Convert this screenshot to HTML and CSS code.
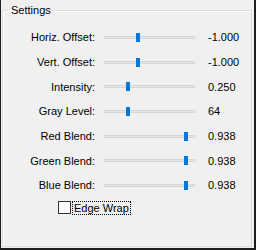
FILE: index.html
```html
<!DOCTYPE html>
<html lang="en">
<head>
    <meta charset="UTF-8">
    <title>Settings</title>
    <link rel="stylesheet" href="styles.css">
</head>
<body>
    <div class="panel">
        <fieldset class="group">
            <legend>Settings</legend>
            <div class="rows">
                <label>Horiz. Offset:</label>
                <div class="slider"><div class="track"></div><div class="thumb" style="left:33px"></div></div>
                <span class="value">-1.000</span>

                <label>Vert. Offset:</label>
                <div class="slider"><div class="track"></div><div class="thumb" style="left:33px"></div></div>
                <span class="value">-1.000</span>

                <label>Intensity:</label>
                <div class="slider"><div class="track"></div><div class="thumb" style="left:23px"></div></div>
                <span class="value">0.250</span>

                <label>Gray Level:</label>
                <div class="slider"><div class="track"></div><div class="thumb" style="left:23px"></div></div>
                <span class="value">64</span>

                <label>Red Blend:</label>
                <div class="slider"><div class="track"></div><div class="thumb" style="left:81px"></div></div>
                <span class="value">0.938</span>

                <label>Green Blend:</label>
                <div class="slider"><div class="track"></div><div class="thumb" style="left:81px"></div></div>
                <span class="value">0.938</span>

                <label>Blue Blend:</label>
                <div class="slider"><div class="track"></div><div class="thumb" style="left:81px"></div></div>
                <span class="value">0.938</span>
            </div>
            <div class="check-row">
                <span class="box"></span>
                <span class="check-label">Edge Wrap</span>
            </div>
        </fieldset>
    </div>
</body>
</html>
```

FILE: styles.css
```css
body {
    margin: 0;
    font-family: "Liberation Sans", Arial, sans-serif;
    font-size: 11px;
    color: #000;
}
.panel {
    width: 253px;
    height: 248px;
    background: #f0f0f0;
    border-left: 1px solid #1e1e1e;
    border-right: 2px solid #1e1e1e;
    border-bottom: 2px solid #1e1e1e;
    display: flex;
}
.group {
    flex: 1;
    margin: 4px 2px 1px 1px;
    padding: 0;
    border: 1px solid #dcdcdc;
    box-shadow: inset 1px 1px 0 #fff;
    min-width: 0;
}
.group legend {
    margin-left: 6px;
    padding: 0 2px;
    line-height: 13px;
}
.rows {
    display: grid;
    grid-template-columns: 92px 101px 1fr;
    grid-auto-rows: 24.7px;
    align-items: center;
    padding-top: 8px;
}
.rows label {
    text-align: right;
}
.slider {
    position: relative;
    height: 9px;
    margin-left: 8px;
}
.track {
    margin: 3px 1px 0;
    height: 1px;
    background: #e7e7e7;
    border: 1px solid #d6d6d6;
}
.thumb {
    position: absolute;
    top: 0;
    width: 4px;
    height: 9px;
    background: #0078d7;
}
.value {
    padding-left: 12px;
}
.check-row {
    display: flex;
    align-items: center;
    gap: 2px;
    margin: 2px 0 0 55px;
    height: 16px;
}
.box {
    width: 11px;
    height: 11px;
    border: 1px solid #333;
    background: #fff;
}
.check-label {
    padding: 0 1px;
    line-height: 12px;
    outline: 1px dotted #000;
}
```
